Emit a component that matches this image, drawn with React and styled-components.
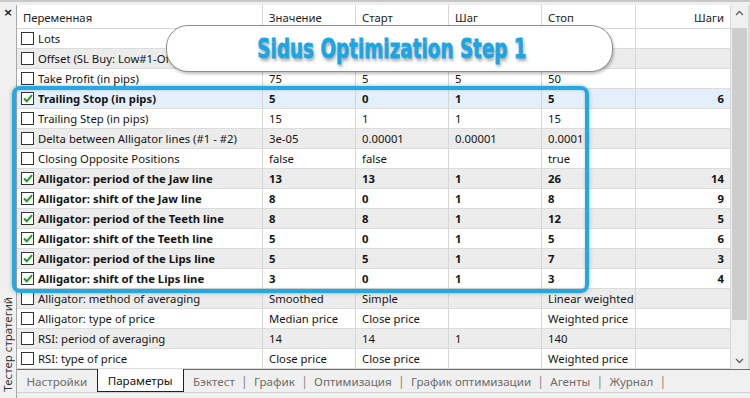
import React from 'react';
import styled, { createGlobalStyle } from 'styled-components';

const GlobalStyle = createGlobalStyle`
  html, body {
    margin: 0;
    padding: 0;
    background: #f0f0f0;
    overflow: hidden;
  }
  * { box-sizing: border-box; }
`;

const Frame = styled.div`
  position: relative;
  width: 750px;
  height: 398px;
  display: flex;
  flex-direction: column;
  font-family: "Noto Sans", "Open Sans", sans-serif;
  font-size: 11.3px;
  color: #1a1a1a;
  background: #f0f0f0;
`;

const TopEdge = styled.div`
  height: 5px;
  border-top: 2px solid #c8c8c8;
  background: #f0f0f0;
`;

const Body = styled.div`
  flex: 1;
  display: flex;
  min-height: 0;
`;

const Side = styled.div`
  width: 17px;
  display: flex;
  flex-direction: column;
  justify-content: space-between;
  align-items: center;
  background: #f0f0f0;
  border-right: 1px solid #a8a8a8;
  padding: 2px 0 6px;
`;

const Close = styled.div`
  font-family: "DejaVu Sans", sans-serif;
  font-size: 11px;
  font-weight: bold;
  line-height: 12px;
  color: #111;
`;

const SideTitle = styled.div`
  writing-mode: vertical-rl;
  transform: rotate(180deg);
  font-size: 11.5px;
  color: #333;
  line-height: 14px;
`;

const Main = styled.div`
  flex: 1;
  display: flex;
  flex-direction: column;
  min-width: 0;
`;

const TableArea = styled.div`
  height: 364px;
  display: flex;
  background: #fff;
`;

const Grid = styled.div`
  flex: 1;
  display: grid;
  grid-template-columns: 246px 93px 93px 93px 94px 1fr;
  grid-auto-rows: 20px;
  grid-template-rows: 24px;
  align-content: start;
`;

const Cell = styled.div`
  display: flex;
  align-items: center;
  padding: 0 6px;
  white-space: nowrap;
  overflow: hidden;
  border-right: 1px solid #d6d6d6;
  border-bottom: 1px solid #dcdcdc;
  background: ${p => (p.$sel ? '#e3effa' : p.$alt ? '#ececec' : '#fff')};
  font-weight: ${p => (p.$bold ? 700 : 400)};
  justify-content: ${p => (p.$right ? 'flex-end' : 'flex-start')};
  color: #141414;
`;

const HeadCell = styled(Cell)`
  background: #fff;
  color: #222;
  border-bottom: 1px solid #d6d6d6;
  padding-top: 1px;
`;

const Box = styled.span`
  width: 13px;
  height: 13px;
  border: 1px solid #333;
  background: #fff;
  margin: 0 4px 0 -2px;
  flex: none;
  display: flex;
  align-items: center;
  justify-content: center;
`;

const Scrollbar = styled.div`
  width: 19px;
  display: flex;
  flex-direction: column;
  align-items: center;
  background: #f0f0f0;
  border-right: 2px solid #dadada;
  padding: 4px 0;
`;

const Arrow = styled.svg`
  flex: none;
  width: 9px;
  height: 9px;
`;

const Thumb = styled.div`
  width: 15px;
  height: 292px;
  margin: 10px 0 auto;
  background: #cdcdcd;
`;

const Tabs = styled.div`
  height: 23px;
  display: flex;
  align-items: stretch;
  border-top: 1px solid #6d6d6d;
  padding-left: 6px;
  background: #f0f0f0;
`;

const Tab = styled.div`
  display: flex;
  align-items: center;
  padding: 0 ${p => (p.$active ? '10px' : '3.5px')};
  margin-top: ${p => (p.$active ? '-1px' : '0')};
  margin-left: ${p => (p.$gap ? '6px' : '0')};
  background: ${p => (p.$active ? '#fff' : 'transparent')};
  border: ${p => (p.$active ? '1px solid #222' : 'none')};
  border-top: none;
  color: ${p => (p.$active ? '#111' : '#6c6c6c')};
  font-size: 11.6px;
`;

const Sep = styled.span`
  display: flex;
  align-items: center;
  color: #8a8a8a;
  padding: 0 2.5px;
  font-size: 13px;
`;

const BottomEdge = styled.div`
  height: 6px;
  border-top: 1px solid #d0d0d0;
  background: #f0f0f0;
`;

const Banner = styled.div`
  position: absolute;
  left: 166px;
  top: 25px;
  width: 447px;
  height: 47px;
  border-radius: 22px;
  background: #fff;
  border: 1px solid #8e8e8e;
  box-shadow: 1px 2px 3px rgba(0, 0, 0, 0.25);
  display: flex;
  align-items: center;
  justify-content: center;
`;

const BannerText = styled.span`
  display: inline-block;
  font-family: "DejaVu Sans", sans-serif;
  font-weight: 700;
  font-size: 27px;
  color: #1ba5e2;
  transform: scaleX(0.68);
  margin-left: 5px;
  white-space: nowrap;
  -webkit-text-stroke: 0.8px #1ba5e2;
  text-shadow: 2px 3px 4px rgba(0, 0, 0, 0.35);
`;

const Highlight = styled.div`
  position: absolute;
  left: 12px;
  top: 86px;
  width: 577px;
  height: 207px;
  border: 4px solid #22a9e1;
  border-radius: 8px;
  box-shadow: 0 0 4px rgba(0, 0, 0, 0.3), inset 0 0 3px rgba(0, 0, 0, 0.2);
  pointer-events: none;
`;

// rows 0 and 1 sit under the banner, only their names show
const rows = [
  ['Lots', '', '', '', '', ''],
  ['Offset (SL Buy: Low#1-Offset)', '', '', '', '', ''],
  ['Take Profit (in pips)', '75', '5', '5', '50', ''],
  ['Trailing Stop (in pips)', '5', '0', '1', '5', '6', true],
  ['Trailing Step (in pips)', '15', '1', '1', '15', ''],
  ['Delta between Alligator lines (#1 - #2)', '3e-05', '0.00001', '0.00001', '0.0001', ''],
  ['Closing Opposite Positions', 'false', 'false', '', 'true', ''],
  ['Alligator: period of the Jaw line', '13', '13', '1', '26', '14', true],
  ['Alligator: shift of the Jaw line', '8', '0', '1', '8', '9', true],
  ['Alligator: period of the Teeth line', '8', '8', '1', '12', '5', true],
  ['Alligator: shift of the Teeth line', '5', '0', '1', '5', '6', true],
  ['Alligator: period of the Lips line', '5', '5', '1', '7', '3', true],
  ['Alligator: shift of the Lips line', '3', '0', '1', '3', '4', true],
  ['Alligator: method of averaging', 'Smoothed', 'Simple', '', 'Linear weighted', ''],
  ['Alligator: type of price', 'Median price', 'Close price', '', 'Weighted price', ''],
  ['RSI: period of averaging', '14', '14', '1', '140', ''],
  ['RSI: type of price', 'Close price', 'Close price', '', 'Weighted price', ''],
];

const tabs = ['Настройки', 'Параметры', 'Бэктест', 'График', 'Оптимизация', 'График оптимизации', 'Агенты', 'Журнал'];

function Check({ on }) {
  return (
    <Box>
      {on && (
        <svg width="10" height="9" viewBox="0 0 10 9">
          <path d="M1 4.5 L3.8 7.3 L9 1.2" fill="none" stroke="#1f9a1f" strokeWidth="2" />
        </svg>
      )}
    </Box>
  );
}

export default function App() {
  return (
    <Frame>
      <GlobalStyle />
      <TopEdge />
      <Body>
        <Side>
          <Close>×</Close>
          <SideTitle>Тестер стратегий</SideTitle>
        </Side>
        <Main>
          <TableArea>
            <Grid>
              <HeadCell>Переменная</HeadCell>
              <HeadCell>Значение</HeadCell>
              <HeadCell>Старт</HeadCell>
              <HeadCell>Шаг</HeadCell>
              <HeadCell>Стоп</HeadCell>
              <HeadCell $right>Шаги</HeadCell>
              {rows.map((r, i) => {
                const bold = !!r[6];
                const sel = i === 3;
                const alt = i % 2 === 1;
                return (
                  <React.Fragment key={i}>
                    <Cell $bold={bold} $sel={sel} $alt={alt}>
                      <Check on={bold} />
                      {r[0]}
                    </Cell>
                    {r.slice(1, 5).map((v, j) => (
                      <Cell key={j} $bold={bold} $sel={sel} $alt={alt}>{v}</Cell>
                    ))}
                    <Cell $bold={bold} $sel={sel} $alt={alt} $right>{r[5]}</Cell>
                  </React.Fragment>
                );
              })}
            </Grid>
            <Scrollbar>
              <Arrow viewBox="0 0 9 9">
                <path d="M1 6 L4.5 2.5 L8 6" fill="none" stroke="#606060" strokeWidth="1.3" />
              </Arrow>
              <Thumb />
              <Arrow viewBox="0 0 9 9">
                <path d="M1 3 L4.5 6.5 L8 3" fill="none" stroke="#606060" strokeWidth="1.3" />
              </Arrow>
            </Scrollbar>
          </TableArea>
          <Tabs>
            {tabs.map((t, i) => (
              <React.Fragment key={t}>
                <Tab $active={i === 1} $gap={i === 1 || i === 2}>{t}</Tab>
                {i > 1 && <Sep>|</Sep>}
              </React.Fragment>
            ))}
          </Tabs>
          <BottomEdge />
        </Main>
      </Body>
      <Banner>
        <BannerText>Sidus Optimization Step 1</BannerText>
      </Banner>
      <Highlight />
    </Frame>
  );
}
